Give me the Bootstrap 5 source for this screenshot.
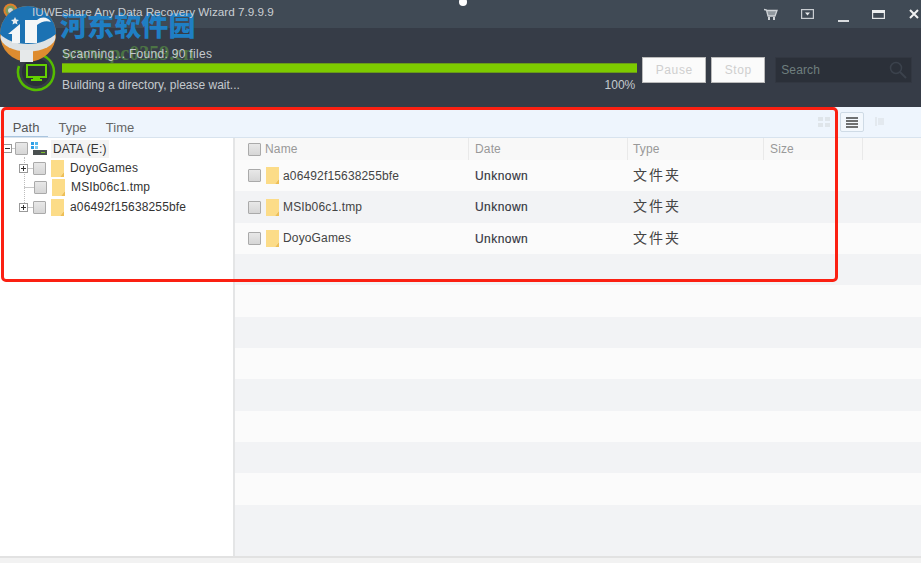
<!DOCTYPE html>
<html lang="en"><head><meta charset="utf-8"><title>Recovery Wizard</title>
<link href="https://cdn.jsdelivr.net/npm/bootstrap@5.3.0/dist/css/bootstrap.min.css" rel="stylesheet">
<style>
html,body{height:563px;overflow:hidden}
body{font-family:"Liberation Sans",Arial,"Noto Sans CJK SC",sans-serif;font-size:12px;letter-spacing:.15px;color:#444;background:#fff}
.appwin{height:563px;position:relative;overflow:hidden}
.titlebar{height:28px;background:#404a55;color:#c9ced3;font-size:11.7px;letter-spacing:0;padding-left:32px}
.titletext{position:relative;z-index:3;margin-top:-5px}
.winicons svg{display:block}
.toolbar{height:79px;background:#363c47;color:#c4c9ce;padding-left:62px;padding-right:9px}
.progblock{width:576px;margin-top:4px;position:relative;z-index:3}
.progline{line-height:14px;height:14px;letter-spacing:.3px}
.buildline{letter-spacing:0;padding-right:2px}
.barwrap{height:10px;background:#7dcb00;margin:2px 0 5px;border-top:1px solid #6a9a18;border-bottom:1px solid #6a9a18}
.actbtn{background:#fbfbfb;border:1px solid #bbb;border-radius:0;color:#cfcfcf;height:26px;font-size:12px;padding:0;line-height:24px;letter-spacing:.6px;margin-top:4px}
.pausebtn{width:64px;margin-left:5px}.stopbtn{width:54px;margin-left:5px}
.searchbox{width:137px;height:26px;background:#2b3039;margin-left:10px;margin-top:4px;color:#6f7f7f;padding-left:5px;border:1px solid #323741}
.tabbar{height:31px;background:#eef5fd;border-bottom:1px solid #d8e3ee;padding-left:4px;padding-top:9px;font-size:13px;letter-spacing:0;color:#555}
.tabitem{padding:5px 0 0;height:21px;line-height:14px;color:#666;text-align:center}
.tabpath{width:44px;border-bottom:1px solid #a9c4de;color:#555;margin-right:10px}
.tabtype{width:29px;margin-right:18px}.tabtime{width:30px}
.mainpane{height:418px}
.treepane{width:233px;background:#fff;flex:none;font-size:12px;color:#333;position:relative;padding-top:1px}
.treeitem{height:19.6px;line-height:19px;white-space:nowrap;position:relative}
.exp{width:9px;height:9px;border:1px solid #999;position:relative;flex:none;background:#fff}
.exp::before{content:"";position:absolute;left:1px;right:1px;top:3px;height:1px;background:#333}
.exp.plus::after{content:"";position:absolute;top:1px;bottom:1px;left:3px;width:1px;background:#333}
.chk{width:13px;height:13px;border:1px solid #aaa;background:linear-gradient(#e8e8e8,#d6d6d6);border-radius:1px;flex:none}
.dot{height:1px;background:#c9c9c9;flex:none}
.dotroot{width:3px}.dotkid{width:5px}.dotmid{width:10px}
.treeguide{position:absolute;left:24px;top:19px;height:48px;border-left:1px dotted #bdbdbd}
.folder{width:13px;height:17px;flex:none;display:block}
.kidrow{padding-left:19px}.midrow{padding-left:24px}
.kidrow .chk,.midrow .chk{margin-right:5px}
.kidrow .folder,.midrow .folder{margin-right:6px}
.rootlabel{background:#f3f3f3;padding:0 2px;color:#333;height:18px;line-height:18px}
.listpane{border-left:2px solid #e4e5e6;flex:1;min-width:0;background:#f2f3f5}
.listhead{height:22px;background:#f8f8f8;color:#999;font-size:12px;flex:none}
.hcell{border-right:1px solid #e9e9e9;height:22px;line-height:22px;padding-left:6px;flex:none}
.cname{width:234px;padding-left:13px}.cdate{width:159px}.ctype{width:136px;padding-left:5px}.csize{width:99px}
.lrow{height:31.35px;line-height:32px;flex:none}
.lrow:nth-child(odd){background:#fbfbfb}
.lrow:nth-child(even){background:#f2f3f5}
.namecell{width:234px;padding-left:13px;color:#444;flex:none}
.namecell .chk{margin-right:5px}
.namecell .folder{margin-right:4px}
.datecell{width:159px;padding-left:6px;color:#33333d;letter-spacing:.45px;flex:none;-webkit-text-stroke:.15px #33333d}
.typecell{padding-left:5px;font-family:"Noto Sans CJK SC",sans-serif;font-size:14px;line-height:28px;letter-spacing:2px;color:#444;flex:none}
.statusbar{height:7px;background:#f2f2f2;border-top:2px solid #e2e2e2}
.redframe{position:absolute;left:1px;top:107px;width:837px;height:175px;border:3px solid #fb2012;border-radius:5px;pointer-events:none}
.wmark{position:absolute;left:60px;top:7px;font-family:"Noto Sans CJK SC",sans-serif;font-weight:900;font-size:27px;line-height:36px;color:#1f7fc4;white-space:nowrap;letter-spacing:.1px}
.wsite{position:absolute;left:62px;top:43px;font-family:"Liberation Serif",serif;font-weight:700;font-size:20px;line-height:20px;color:#4c7444;white-space:nowrap;letter-spacing:0}
.wlogo{position:absolute;left:0;top:6px}
.topdot{position:absolute;left:459px;top:-2px;width:8px;height:8px;border-radius:50%;background:#fff}
.appico{position:absolute;left:3px;top:3px}
.monico{position:absolute;left:16px;top:50px}
.gridic{position:absolute;left:818px;top:117px}
.viewsel{position:absolute;left:840px;top:112px;width:24px;height:20px;background:#f3f8fd;border:1px solid #cfdbe6;border-radius:2px}
.detailic{position:absolute;left:875px;top:117px}
</style></head>
<body>
<div class="appwin">
  <div class="titlebar d-flex align-items-center">
    <span class="titletext">IUWEshare Any Data Recovery Wizard 7.9.9.9</span>
    <div class="winicons d-flex align-items-center ms-auto">
      <svg width="14" height="13" viewBox="0 0 14 13" style="margin-right:23px"><path d="M0 1.500l2.500 .5 1.500 6h7l2-5.500H2.500" fill="#8f979e" stroke="#cfd3d7" stroke-width="1.300"/><path d="M5 9v3M10 9v3" stroke="#cfd3d7" stroke-width="2"/></svg>
      <svg width="13" height="10" viewBox="0 0 13 10" style="margin-right:24px"><rect x=".6" y=".6" width="11.800" height="8.800" fill="none" stroke="#c9cdd1" stroke-width="1.200"/><path d="M4 3.500h5L6.500 6.500z" fill="#e6e8ea"/></svg>
      <svg width="11" height="11" viewBox="0 0 11 11" style="margin-right:23px;margin-top:7px"><rect x="0" y="8" width="11" height="2" fill="#d8dbde"/></svg>
      <svg width="13" height="9" viewBox="0 0 13 9" style="margin-right:24px"><rect x=".6" y=".6" width="11.800" height="7.800" fill="none" stroke="#e3e5e7" stroke-width="1.200"/><rect x="0" y="0" width="13" height="3" fill="#eceeef"/></svg>
      <svg width="10" height="10" viewBox="0 0 10 10" style="margin-right:2px"><path d="M1 1l8 8M9 1l-8 8" stroke="#f1f2f3" stroke-width="2"/></svg>
    </div>
  </div>
  <div class="toolbar d-flex align-items-center">
    <div class="progblock">
      <div class="progline">Scanning... Found: 90 files</div>
      <div class="barwrap"></div>
      <div class="progline buildline d-flex justify-content-between"><span>Building a directory, please wait...</span><span>100%</span></div>
    </div>
    <button class="btn actbtn pausebtn" type="button">Pause</button>
    <button class="btn actbtn stopbtn" type="button">Stop</button>
    <div class="searchbox d-flex align-items-center justify-content-between">
      <span>Search</span>
      <svg width="18" height="18" viewBox="0 0 18 18" class="me-1"><circle cx="7" cy="7" r="5.500" fill="none" stroke="#3b424c" stroke-width="1.500"/><path d="M11 11l6 6" stroke="#3b424c" stroke-width="2"/></svg>
    </div>
  </div>
  <div class="tabbar d-flex">
    <div class="tabitem tabpath">Path</div>
    <div class="tabitem tabtype">Type</div>
    <div class="tabitem tabtime">Time</div>
  </div>
  <div class="mainpane d-flex">
    <div class="treepane">
      <div class="treeguide"></div>
      <div class="treeitem d-flex align-items-center" style="padding-left:3px"><span class="exp"></span><span class="dot dotroot"></span><span class="chk" style="margin-right:3px"></span>
        <svg width="17" height="14" viewBox="0 0 17 14" style="margin-right:3px"><rect x="0" y="0" width="3" height="3" fill="#2e9fe6"/><rect x="4" y="0" width="3" height="3" fill="#4fb6ee"/><rect x="0" y="4" width="3" height="3" fill="#2e9fe6"/><rect x="4" y="4" width="3" height="3" fill="#7cc9f0"/><rect x="2" y="8" width="14" height="5" fill="#4a5050"/><rect x="10" y="10" width="4" height="1" fill="#7cc22a"/></svg>
        <span class="rootlabel">DATA (E:)</span></div>
      <div class="treeitem kidrow d-flex align-items-center"><span class="exp plus"></span><span class="dot dotkid"></span><span class="chk"></span>
        <svg class="folder" viewBox="0 0 13 17"><path d="M0 0h13v12l-4 5H0z" fill="#fcdc88"/><path d="M13 12v5H9z" fill="#eebf55"/></svg><span>DoyoGames</span></div>
      <div class="treeitem midrow d-flex align-items-center"><span class="dot dotmid"></span><span class="chk"></span>
        <svg class="folder" viewBox="0 0 13 17"><path d="M0 0h13v12l-4 5H0z" fill="#fcdc88"/><path d="M13 12v5H9z" fill="#eebf55"/></svg><span>MSIb06c1.tmp</span></div>
      <div class="treeitem kidrow d-flex align-items-center"><span class="exp plus"></span><span class="dot dotkid"></span><span class="chk"></span>
        <svg class="folder" viewBox="0 0 13 17"><path d="M0 0h13v12l-4 5H0z" fill="#fcdc88"/><path d="M13 12v5H9z" fill="#eebf55"/></svg><span>a06492f15638255bfe</span></div>
    </div>
    <div class="listpane d-flex flex-column">
      <div class="listhead d-flex">
        <div class="hcell cname d-flex align-items-center"><span class="chk" style="margin-right:4px"></span>Name</div>
        <div class="hcell cdate">Date</div>
        <div class="hcell ctype">Type</div>
        <div class="hcell csize">Size</div>
      </div>
      <div class="d-flex flex-column">
        <div class="lrow d-flex"><div class="namecell d-flex align-items-center"><span class="chk"></span><svg class="folder" viewBox="0 0 13 17"><path d="M0 0h13v12l-4 5H0z" fill="#fcdc88"/><path d="M13 12v5H9z" fill="#eebf55"/></svg><span>a06492f15638255bfe</span></div><div class="datecell">Unknown</div><div class="typecell">文件夹</div></div>
        <div class="lrow d-flex"><div class="namecell d-flex align-items-center"><span class="chk"></span><svg class="folder" viewBox="0 0 13 17"><path d="M0 0h13v12l-4 5H0z" fill="#fcdc88"/><path d="M13 12v5H9z" fill="#eebf55"/></svg><span>MSIb06c1.tmp</span></div><div class="datecell">Unknown</div><div class="typecell">文件夹</div></div>
        <div class="lrow d-flex"><div class="namecell d-flex align-items-center"><span class="chk"></span><svg class="folder" viewBox="0 0 13 17"><path d="M0 0h13v12l-4 5H0z" fill="#fcdc88"/><path d="M13 12v5H9z" fill="#eebf55"/></svg><span>DoyoGames</span></div><div class="datecell">Unknown</div><div class="typecell">文件夹</div></div>
        <div class="lrow"></div><div class="lrow"></div><div class="lrow"></div><div class="lrow"></div><div class="lrow"></div><div class="lrow"></div><div class="lrow"></div><div class="lrow"></div>
      </div>
    </div>
  </div>
  <div class="statusbar"></div>

  <svg class="appico" width="15" height="15" viewBox="0 0 15 15"><circle cx="7.500" cy="7.500" r="7" fill="#e0812c"/><circle cx="7.500" cy="7.500" r="5" fill="#7d9b5a"/><circle cx="7.500" cy="7.500" r="2.500" fill="#cfd6db"/></svg>
  <svg class="monico" width="40" height="42" viewBox="0 0 40 42"><path d="M20 4a18 18 0 1 1-17 12" fill="none" stroke="#55bd00" stroke-width="2.500"/><circle cx="20" cy="22" r="14" fill="#2a2f37"/><rect x="11" y="15" width="19" height="12" fill="none" stroke="#63d000" stroke-width="2"/><rect x="17" y="27" width="7" height="3" fill="#63d000"/><rect x="15" y="29" width="11" height="2" fill="#63d000"/></svg>
  <div class="wsite">www.pc0359.cn</div>
  <svg class="wlogo" width="57" height="57" viewBox="0 0 57 57"><circle cx="28" cy="28" r="28" fill="#de8c30"/><ellipse cx="28" cy="31" rx="27.500" ry="14.500" fill="#dde2e5"/><path d="M0 28A28 28 0 0 1 56 28C50 33 40 38 28 38C15 38 6 34 0 28z" fill="#1c72b3"/><path d="M8 28L20 18V37H12V28z" fill="#f4f6f7"/><path d="M25 14H37V37H25z" fill="#f4f6f7"/><path d="M37 14C42 10 48 11 51 16C46 14 41 16 37 19z" fill="#f4f6f7"/><path d="M15 11l1.200 2.600 2.800.3-2.100 1.900.6 2.800-2.500-1.400-2.500 1.400.6-2.800-2.100-1.900 2.800-.3z" fill="#e8edf0"/><path d="M20 44H33V56H20z" fill="#e6e9ea"/></svg>
  <div class="wmark">河东软件园</div>

  <svg class="gridic" width="12" height="10" viewBox="0 0 12 10"><g fill="#dfe5ea"><rect x="0" y="0" width="5" height="4"/><rect x="7" y="0" width="5" height="4"/><rect x="0" y="6" width="5" height="4"/><rect x="7" y="6" width="5" height="4"/></g></svg>
  <div class="viewsel d-flex align-items-center justify-content-center"><svg width="12" height="11" viewBox="0 0 12 11"><path d="M0 1h12M0 4h12M0 7h12M0 10h12" stroke="#444" stroke-width="1.400"/></svg></div>
  <svg class="detailic" width="9" height="9" viewBox="0 0 9 9"><rect x="0" y="0" width="2" height="9" fill="#e3e9ef"/><rect x="3" y="1" width="6" height="7" fill="#e3e9ef"/></svg>
  <div class="redframe"></div>
  <div class="topdot"></div>
</div>
</body></html>
